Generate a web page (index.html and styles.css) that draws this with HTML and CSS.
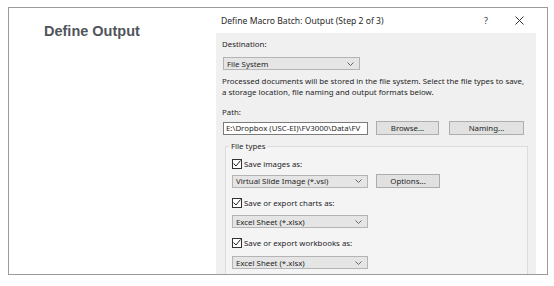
FILE: index.html
```html
<!DOCTYPE html>
<html>
<head>
<meta charset="utf-8">
<link rel="stylesheet" href="styles.css">
</head>
<body>
<div class="frame">
  <div class="side">
    <h1 class="heading">Define Output</h1>
  </div>
  <div class="dialog">
    <div class="titlebar">
      <span class="title">Define Macro Batch: Output (Step 2 of 3)</span>
      <span class="help">?</span>
      <span class="close"><svg width="9" height="9" viewBox="0 0 9 9"><path d="M0.5 0.5 L8.5 8.5 M8.5 0.5 L0.5 8.5" stroke="#333" stroke-width="1" fill="none"/></svg></span>
    </div>
    <div class="body">
      <div class="label">Destination:</div>
      <div class="select sel-dest"><span>File System</span><svg class="chev" width="7" height="4" viewBox="0 0 7 4"><path d="M0.5 0.5 L3.5 3.5 L6.5 0.5" stroke="#666" fill="none"/></svg></div>
      <p class="desc">Processed documents will be stored in the file system. Select the file types to save,<br>a storage location, file naming and output formats below.</p>
      <div class="label label-path">Path:</div>
      <div class="row">
        <div class="input">E:\Dropbox (USC-EI)\FV3000\Data\FV</div>
        <div class="btn btn-browse">Browse...</div>
        <div class="btn btn-naming">Naming...</div>
      </div>
      <fieldset class="group">
        <legend class="legend">File types</legend>
        <label class="check check-first"><span class="box"><svg width="8" height="7" viewBox="0 0 8 7"><path d="M0.5 3.5 L3 6 L7.5 0.5" stroke="#222" fill="none"/></svg></span>Save images as:</label>
        <div class="row">
          <div class="select sel-inner"><span>Virtual Slide Image (*.vsi)</span><svg class="chev" width="7" height="4" viewBox="0 0 7 4"><path d="M0.5 0.5 L3.5 3.5 L6.5 0.5" stroke="#666" fill="none"/></svg></div>
          <div class="btn btn-options">Options...</div>
        </div>
        <label class="check"><span class="box"><svg width="8" height="7" viewBox="0 0 8 7"><path d="M0.5 3.5 L3 6 L7.5 0.5" stroke="#222" fill="none"/></svg></span>Save or export charts as:</label>
        <div class="select sel-inner"><span>Excel Sheet (*.xlsx)</span><svg class="chev" width="7" height="4" viewBox="0 0 7 4"><path d="M0.5 0.5 L3.5 3.5 L6.5 0.5" stroke="#666" fill="none"/></svg></div>
        <label class="check check-last"><span class="box"><svg width="8" height="7" viewBox="0 0 8 7"><path d="M0.5 3.5 L3 6 L7.5 0.5" stroke="#222" fill="none"/></svg></span>Save or export workbooks as:</label>
        <div class="select sel-inner"><span>Excel Sheet (*.xlsx)</span><svg class="chev" width="7" height="4" viewBox="0 0 7 4"><path d="M0.5 0.5 L3.5 3.5 L6.5 0.5" stroke="#666" fill="none"/></svg></div>
      </fieldset>
    </div>
  </div>
</div>
</body>
</html>
```

FILE: styles.css
```css
* { box-sizing: border-box; }
html, body { margin: 0; padding: 0; background: #ffffff; }
body { width: 554px; height: 286px; overflow: hidden; }

.frame {
  margin: 7px 0 0 8px;
  width: 540px;
  height: 268px;
  border: 1px solid #9b9b9b;
  display: flex;
  overflow: hidden;
}

.side {
  width: 207px;
  flex: none;
  padding: 15px 0 0 35px;
}
.heading {
  margin: 0;
  font-family: "Liberation Sans", Arial, sans-serif;
  font-weight: bold;
  font-size: 14.5px;
  line-height: 16px;
  color: #50555b;
}

.dialog {
  flex: 1;
  display: flex;
  flex-direction: column;
  font-family: "Noto Sans", "Open Sans", sans-serif;
  color: #1f1f1f;
}

.titlebar {
  height: 25px;
  flex: none;
  display: flex;
  align-items: center;
  padding-left: 5px;
  font-size: 8.6px;
}
.title { flex: 1; }
.help { width: 31px; font-size: 9px; color: #333; }
.close { width: 32px; display: flex; align-items: center; }

.body {
  flex: 1;
  background: #f0f0f0;
  margin-right: 11px;
  padding: 6px 0 0 6px;
  font-size: 7.85px;
}

.label { line-height: 11px; height: 11px; }
.label-path { margin-top: 9px; }

.select {
  display: flex;
  align-items: center;
  justify-content: space-between;
  height: 13px;
  background: #e5e5e5;
  border: 1px solid #b4b4b4;
  padding: 0 5px 0 3px;
  white-space: nowrap;
}
.sel-dest { width: 137px; margin: 7px 0 0 1px; }
.sel-inner { width: 136px; }
.chev { flex: none; }

.desc {
  margin: 6px 0 0 0;
  line-height: 11px;
  white-space: nowrap;
}

.row { display: flex; align-items: center; }
.input {
  width: 145px;
  height: 13px;
  margin: 3px 0 0 1px;
  background: #ffffff;
  border: 1px solid #7a7a7a;
  padding: 0 2px;
  line-height: 11px;
  white-space: nowrap;
  overflow: hidden;
}
.btn {
  height: 14px;
  background: #e1e1e1;
  border: 1px solid #adadad;
  display: flex;
  align-items: center;
  justify-content: center;
}
.btn-browse { width: 63px; margin: 3px 0 0 8px; }
.btn-naming { width: 75px; margin: 3px 0 0 10px; }
.btn-options { width: 64px; margin-left: 8px; }

.group {
  margin: 6px 0 0 3px;
  width: 303px;
  height: 170px;
  border: 1px solid #dcdcdc;
  background: #f4f4f5;
  padding: 0 0 0 6px;
}
.legend {
  padding: 0 2px;
  margin-left: -3px;
  line-height: 11px;
}

.check {
  display: flex;
  align-items: center;
  height: 11px;
  margin: 9px 0 7px 0;
}
.check-first { margin: 6px 0 5px 0; }
.check-last { margin-bottom: 8px; }
.box {
  width: 10px;
  height: 10px;
  border: 1px solid #333;
  background: #ffffff;
  display: flex;
  align-items: center;
  justify-content: center;
  margin-right: 2px;
}
```
